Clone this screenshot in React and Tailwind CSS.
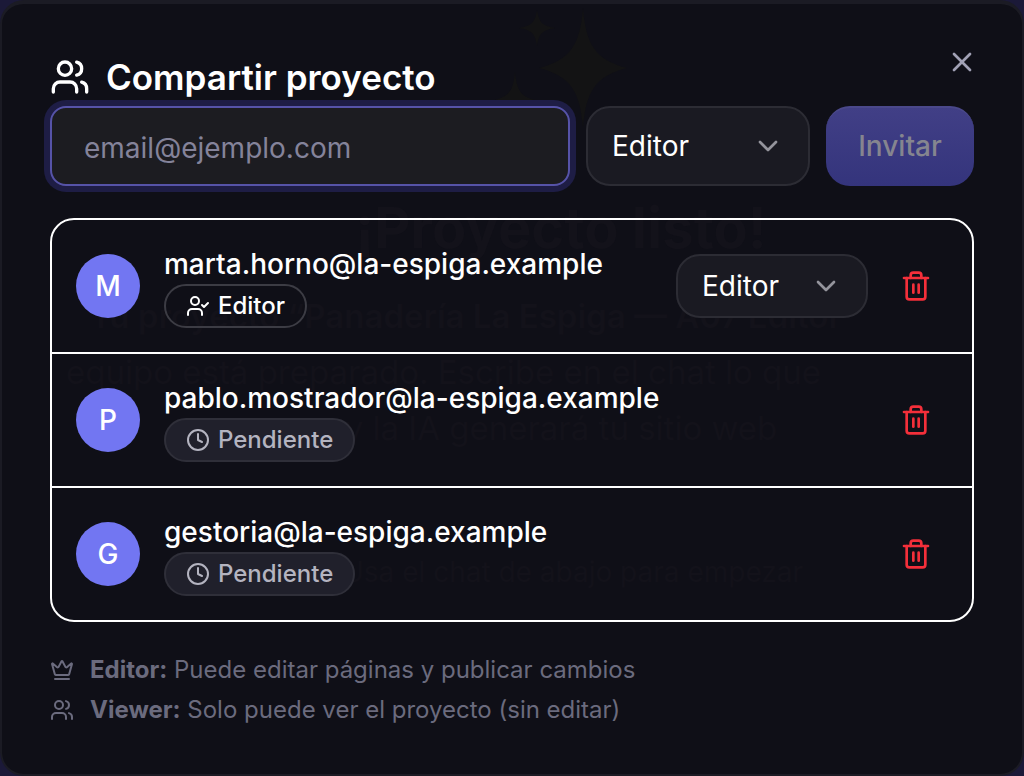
import { useState } from 'react';
import { ChevronDown, Clock, Crown, Trash2, UserCheck, Users, X } from 'lucide-react';

const members = [
  { email: 'marta.horno@la-espiga.example', role: 'editor' },
  { email: 'pablo.mostrador@la-espiga.example', pending: true },
  { email: 'gestoria@la-espiga.example', pending: true },
];

const RoleSelect = ({ label, value, onChange, className }) => (
  <div className="relative shrink-0">
    <select
      aria-label={label}
      value={value}
      onChange={(e) => onChange(e.target.value)}
      className={`appearance-none border-2 border-[#2c2c34] bg-[#1a1a22] pl-6 text-[28px] text-white outline-none ${className}`}
    >
      <option value="editor">Editor</option>
      <option value="viewer">Viewer</option>
    </select>
    <ChevronDown
      size={32}
      className="pointer-events-none absolute inset-y-0 right-[26px] my-auto text-[#94949c]"
    />
  </div>
);

const MemberRow = ({ email, role, pending }) => {
  const [current, setCurrent] = useState(role);

  return (
    <li className="flex items-center gap-4 p-6">
      <div className="mr-2 flex size-16 shrink-0 items-center justify-center rounded-full bg-[#7276f2] text-[28px] font-medium text-white">
        {email[0].toUpperCase()}
      </div>
      <div className="min-w-0 flex-1">
        <p className="truncate text-[28px] leading-10 font-medium">{email}</p>
        {pending ? (
          <span className="flex h-11 w-fit items-center gap-2 rounded-full border-2 border-[#2f2f39] bg-[#20202b] px-5 text-2xl font-medium text-[#b4b4c0]">
            <Clock size={24} />
            Pendiente
          </span>
        ) : (
          <span className="flex h-11 w-fit items-center gap-2 rounded-full border-2 border-[#3c3c44] px-5 text-2xl font-medium">
            <UserCheck size={24} />
            Editor
          </span>
        )}
      </div>
      {!pending && (
        <RoleSelect
          label={`Rol de ${email}`}
          value={current}
          onChange={setCurrent}
          className="h-16 w-48 rounded-3xl"
        />
      )}
      <button type="button" aria-label={`Eliminar a ${email}`} className="p-4 text-[#f42f3a]">
        <Trash2 size={32} />
      </button>
    </li>
  );
};

// The empty-state screen that shows faintly through the dialog
const Backdrop = () => (
  <div
    aria-hidden="true"
    className="pointer-events-none absolute inset-0 overflow-hidden text-[#13121a]"
  >
    <div className="flex flex-col items-center pl-[98px]">
      <svg viewBox="0 0 144 144" className="size-36 shrink-0 fill-[#131314]">
        <path d="M94 4c3 36 12 52 44 60c-32 8-41 24-44 60c-3-36-12-52-44-60c32-8 41-24 44-60z" />
        <path d="M48 6c2 12 5 16 18 18c-13 2-16 6-18 18c-2-12-5-16-18-18c13-2 16-6 18-18z" />
        <path d="M26 68c2 18 5 24 20 28c-15 4-18 10-20 30c-2-20-5-26-20-30c15-4 18-10 20-28z" />
      </svg>
      <p className="mt-11 text-[56px] leading-[72px] font-bold">¡Proyecto listo!</p>
    </div>
    <div className="mt-6 pl-16 text-[33px] leading-14 whitespace-nowrap">
      <p className="pl-6 font-semibold">Tu proyecto “Panadería La Espiga — A07 Editor</p>
      <p>equipo está preparado. Escribe en el chat lo que</p>
    </div>
    <div className="flex flex-col items-center pl-[98px]">
      <p className="text-[33px] leading-14">y la IA generará tu sitio web</p>
      <p className="mt-20 pl-6 text-[28px] leading-[72px]">Usa el chat de abajo para empezar</p>
    </div>
  </div>
);

const App = () => {
  const [email, setEmail] = useState('');
  const [role, setRole] = useState('editor');

  return (
    <div className="min-h-screen bg-[#1b1938] font-['Inter',sans-serif] text-white">
      <main className="relative rounded-3xl border-2 border-t-4 border-[#1b1b24] bg-[#0f0f17] px-12 pt-12 pb-11">
        <Backdrop />
        <button type="button" aria-label="Cerrar" className="absolute top-[42px] right-11 text-[#a1a1b5]">
          <X size={32} />
        </button>
        <div className="relative">
          <h1 className="flex items-center gap-4 pb-1 text-[35px] leading-[50px] font-semibold">
            <Users size={40} />
            Compartir proyecto
          </h1>

          <form className="flex gap-4" onSubmit={(e) => e.preventDefault()}>
            <input
              type="email"
              aria-label="Correo electrónico"
              placeholder="email@ejemplo.com"
              value={email}
              onChange={(e) => setEmail(e.target.value)}
              className="h-20 min-w-0 flex-1 rounded-2xl border-2 border-[#5653a8] bg-[#1c1c21] px-8 pt-1 text-[28px] ring-6 ring-[#1e1d45] outline-none placeholder:text-[#84839a]"
            />
            <RoleSelect label="Rol" value={role} onChange={setRole} className="h-20 w-56 rounded-3xl" />
            <button
              type="submit"
              disabled={!email}
              className="h-20 w-[148px] rounded-3xl border-t-2 border-[#4a488a] bg-linear-to-b from-[#413f86] to-[#34347c] pb-[2px] text-[28px] font-medium text-[#85858f]"
            >
              Invitar
            </button>
          </form>

          <ul className="mt-8 divide-y-2 divide-white rounded-3xl border-2 border-white">
            {members.map((m) => (
              <MemberRow key={m.email} {...m} />
            ))}
          </ul>

          <div className="mt-7 text-2xl leading-10 text-[#6b6b7e]">
            <p className="flex items-center gap-4">
              <Crown size={24} />
              <span><strong className="font-bold">Editor:</strong> Puede editar páginas y publicar cambios</span>
            </p>
            <p className="flex items-center gap-4">
              <Users size={24} />
              <span><strong className="font-bold">Viewer:</strong> Solo puede ver el proyecto (sin editar)</span>
            </p>
          </div>
        </div>
      </main>
    </div>
  );
};

export default App;
